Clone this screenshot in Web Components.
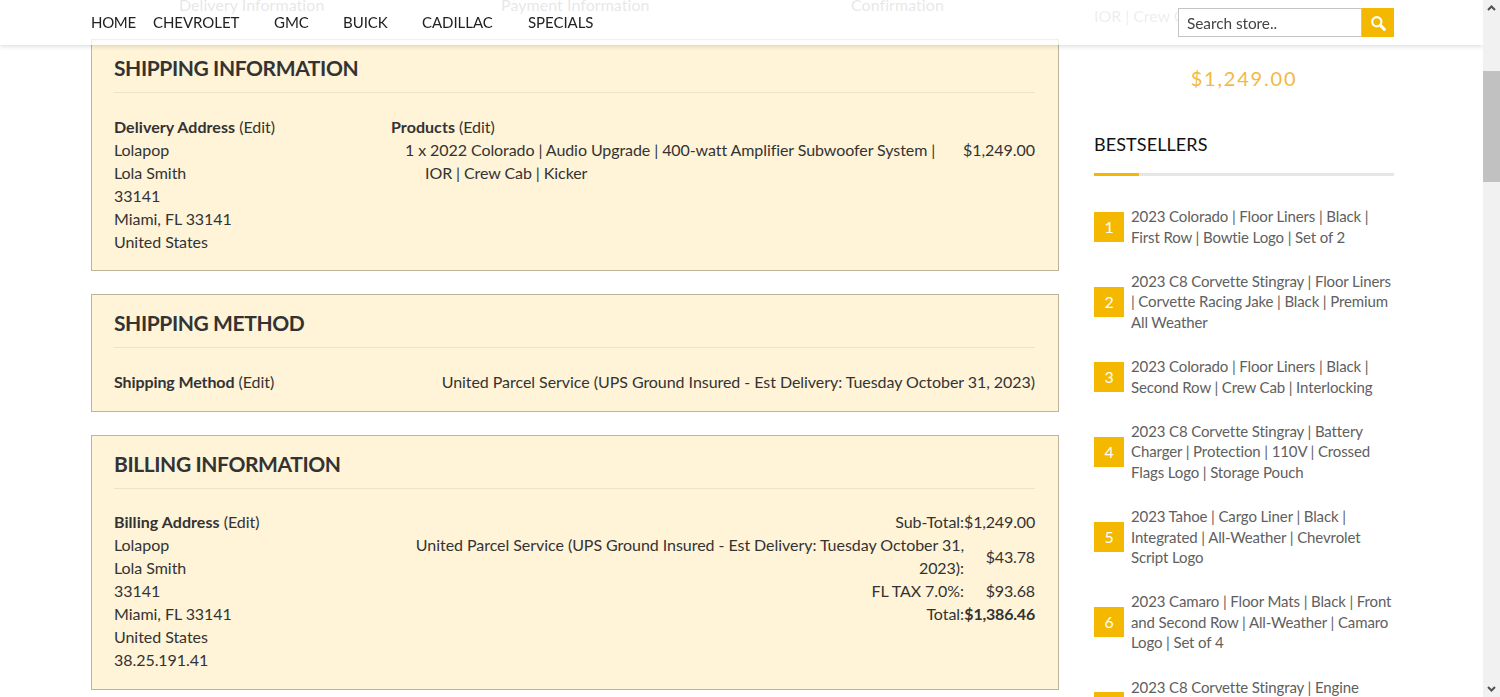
<!DOCTYPE html>
<html>
<head>
<meta charset="utf-8">
<style>
    html, body { margin: 0; height: 697px; overflow: hidden; background: #fff; }
    body { font-family: Lato, "Open Sans", sans-serif; font-size: 16px; line-height: 23px; color: #333; letter-spacing: -.05px; }
</style>
</head>
<body>
<store-header></store-header>
<fake-scrollbar></fake-scrollbar>
<checkout-page>
    <checkout-steps></checkout-steps>
    <info-card title="SHIPPING INFORMATION" style="height:232px">
        <shipping-info></shipping-info>
    </info-card>
    <info-card title="SHIPPING METHOD" style="height:118px">
        <method-row></method-row>
    </info-card>
    <info-card title="BILLING INFORMATION" style="height:255px">
        <billing-info></billing-info>
    </info-card>
    <best-sellers slot="side"></best-sellers>
</checkout-page>

<script>
function addShadow(el, html) {
    const shadow = el.attachShadow({ mode: 'open' });
    const template = document.createElement('template');
    template.innerHTML = html;
    shadow.appendChild(template.content.cloneNode(true));
}

class StoreHeader extends HTMLElement {
    connectedCallback() {
        const menu = [['HOME', 62], ['CHEVROLET', 121], ['GMC', 69], ['BUICK', 79], ['CADILLAC', 106], ['SPECIALS', 80]];
        addShadow(this, `
            <style>
                :host {
                    position: fixed; top: 0; left: 0; width: 1483px; height: 45px; z-index: 5;
                    box-sizing: border-box; padding: 8px 89px 0 91px;
                    display: flex; justify-content: space-between; align-items: flex-start;
                    background: rgba(255,255,255,.8);
                    box-shadow: 0 1px 5px rgba(0,0,0,.16);
                }
                nav { display: flex; color: #222; font-size: 15px; line-height: 28px; }
                nav span:first-child { letter-spacing: -.3px; }
                .search { display: flex; height: 29px; }
                .box {
                    width: 184px; box-sizing: border-box; border: 1px solid #c4c4c4; background: #fff;
                    padding-left: 8px; line-height: 28px; color: #444; font-size: 15.4px;
                }
                .btn { width: 32px; background: #f4b800; display: flex; align-items: center; justify-content: center; }
            </style>
            <nav>${menu.map(m => `<span style="width:${m[1]}px">${m[0]}</span>`).join('')}</nav>
            <div class="search">
                <div class="box">Search store..</div>
                <div class="btn">
                    <svg width="16" height="16" viewBox="0 0 16 16" fill="none" stroke="#fff">
                        <circle cx="6.8" cy="6.8" r="4.6" stroke-width="2.2"/>
                        <path d="M10.4 10.4 L14.4 14.4" stroke-width="3" stroke-linecap="round"/>
                    </svg>
                </div>
            </div>
        `);
    }
}

class FakeScrollbar extends HTMLElement {
    connectedCallback() {
        addShadow(this, `
            <style>
                :host {
                    position: fixed; top: 0; right: 0; width: 17px; height: 697px; z-index: 6;
                    background: #f1f1f1; display: flex; flex-direction: column; justify-content: space-between;
                }
                .thumb { position: absolute; top: 71px; left: 0; width: 17px; height: 111px; background: #c1c1c1; }
                svg { display: block; margin: 5px auto; }
            </style>
            <svg width="9" height="6" viewBox="0 0 9 6" fill="none" stroke="#505050" stroke-width="2"><path d="M1 5 L4.5 1.5 L8 5"/></svg>
            <div class="thumb"></div>
            <svg width="9" height="6" viewBox="0 0 9 6" fill="none" stroke="#505050" stroke-width="2"><path d="M1 1 L4.5 4.5 L8 1"/></svg>
        `);
    }
}

class CheckoutPage extends HTMLElement {
    connectedCallback() {
        addShadow(this, `
            <style>
                :host {
                    display: grid; grid-template-columns: 968px 300px; column-gap: 35px;
                    padding-left: 91px; margin-top: -10px;
                }
                .main { display: flex; flex-direction: column; }
            </style>
            <div class="main"><slot></slot></div>
            <div><slot name="side"></slot></div>
        `);
    }
}

class CheckoutSteps extends HTMLElement {
    connectedCallback() {
        addShadow(this, `
            <style>
                :host {
                    display: flex; box-sizing: border-box; height: 49px; color: #888; line-height: 23px;
                    padding: 3px 0 0 88px; letter-spacing: .05px;
                }
                span { display: block; }
            </style>
            <span style="width:322px">Delivery Information</span>
            <span style="width:350px">Payment Information</span>
            <span>Confirmation</span>
        `);
    }
}

class InfoCard extends HTMLElement {
    connectedCallback() {
        addShadow(this, `
            <style>
                :host {
                    display: block; box-sizing: border-box; margin-bottom: 23px;
                    background: #fff3d8; border: 1px solid #bdb49c; padding: 0 23px 0 22px;
                }
                h2 {
                    margin: 0 0 22px; height: 53px; line-height: 55px; box-sizing: border-box;
                    font-size: 21px; font-weight: 700; color: #333; letter-spacing: -.4px;
                    border-bottom: 1px solid #ece3cb;
                }
            </style>
            <h2>${this.getAttribute('title')}</h2>
            <slot></slot>
        `);
    }
}

const labelStyle = `
    b { font-weight: 700; letter-spacing: .06px; }
`;

class ShippingInfo extends HTMLElement {
    connectedCallback() {
        addShadow(this, `
            <style>
                :host { display: grid; grid-template-columns: 277px 1fr; }
                ${labelStyle}
                .line { display: flex; justify-content: space-between; margin-left: 14px; }
                .name { padding-left: 20px; text-indent: -20px; letter-spacing: -.08px; }
            </style>
            <div>
                <b>Delivery Address</b> (Edit)<br>
                Lolapop<br>Lola Smith<br>33141<br>Miami, FL 33141<br>United States
            </div>
            <div>
                <b>Products</b> (Edit)
                <div class="line">
                    <div class="name">1 x 2022 Colorado | Audio Upgrade | 400-watt Amplifier Subwoofer System |<br>IOR | Crew Cab | Kicker</div>
                    <div>$1,249.00</div>
                </div>
            </div>
        `);
    }
}

class MethodRow extends HTMLElement {
    connectedCallback() {
        addShadow(this, `
            <style>
                :host { display: flex; justify-content: space-between; }
                b { font-weight: 700; letter-spacing: -.1px; }
            </style>
            <div><b>Shipping Method</b> (Edit)</div>
            <div>United Parcel Service (UPS Ground Insured - Est Delivery: Tuesday October 31, 2023)</div>
        `);
    }
}

class BillingInfo extends HTMLElement {
    connectedCallback() {
        const rows = [
            ['Sub-Total:', '$1,249.00'],
            ['United Parcel Service (UPS Ground Insured - Est Delivery: Tuesday October 31,<br>2023):', '$43.78'],
            ['FL TAX 7.0%:', '$93.68'],
            ['Total:', '<b>$1,386.46</b>']
        ];
        addShadow(this, `
            <style>
                :host { display: grid; grid-template-columns: 301px 1fr; margin-top: -1px; }
                ${labelStyle}
                .totals { display: grid; grid-template-columns: 549px 71px; align-content: start; text-align: right; }
                .lbl { white-space: nowrap; }
                .val { align-self: center; letter-spacing: -.15px; }
                .val b { letter-spacing: -.2px; }
            </style>
            <div>
                <b>Billing Address</b> (Edit)<br>
                Lolapop<br>Lola Smith<br>33141<br>Miami, FL 33141<br>United States<br>38.25.191.41
            </div>
            <div class="totals">
                ${rows.map(r => `<div class="lbl">${r[0]}</div><div class="val">${r[1]}</div>`).join('')}
            </div>
        `);
    }
}

const bestsellers = [
    '2023 Colorado | Floor Liners | Black | First Row | Bowtie Logo | Set of 2',
    '2023 C8 Corvette Stingray | Floor Liners | Corvette Racing Jake | Black | Premium All Weather',
    '2023 Colorado | Floor Liners | Black | Second Row | Crew Cab | Interlocking',
    '2023 C8 Corvette Stingray | Battery Charger | Protection | 110V | Crossed Flags Logo | Storage Pouch',
    '2023 Tahoe | Cargo Liner | Black | Integrated | All-Weather | Chevrolet Script Logo',
    '2023 Camaro | Floor Mats | Black | Front and Second Row | All-Weather | Camaro Logo | Set of 4',
    '2023 C8 Corvette Stingray | Engine<br>&nbsp;<br>&nbsp;'
];

class RankItem extends HTMLElement {
    connectedCallback() {
        addShadow(this, `
            <style>
                :host { display: flex; align-items: center; gap: 7px; }
                .num {
                    flex: none; width: 30px; height: 30px; background: #f4b800; color: #fff;
                    text-align: center; line-height: 30px;
                }
                .txt { font-size: 15px; line-height: 20.5px; color: #606060; letter-spacing: -.12px; }
            </style>
            <div class="num">${this.getAttribute('rank')}</div>
            <div class="txt"><slot></slot></div>
        `);
    }
}

class BestSellers extends HTMLElement {
    connectedCallback() {
        addShadow(this, `
            <style>
                :host { display: block; }
                .crew { color: #aaa; height: 24px; line-height: 23px; padding-top: 14px; white-space: nowrap; }
                .price {
                    text-align: center; font-size: 20px; letter-spacing: 1.8px; color: #f4b942;
                    line-height: 30px; margin: 35px 0 38px;
                }
                h3 {
                    margin: 0; font-size: 18px; font-weight: 400; color: #111; line-height: 26px;
                    padding-bottom: 16px; border-bottom: 3px solid #e6e6e6; position: relative; letter-spacing: .1px;
                }
                h3::after {
                    content: ""; position: absolute; left: 0; bottom: -3px; width: 45px; height: 3px; background: #f4b800;
                }
                .list { display: flex; flex-direction: column; gap: 23.75px; margin-top: 30px; }
            </style>
            <div class="crew">IOR | Crew Cab | Kicker</div>
            <div class="price">$1,249.00</div>
            <h3>BESTSELLERS</h3>
            <div class="list">
                ${bestsellers.map((t, i) => `<rank-item rank="${i + 1}">${t}</rank-item>`).join('')}
            </div>
        `);
    }
}

customElements.define('store-header', StoreHeader);
customElements.define('fake-scrollbar', FakeScrollbar);
customElements.define('checkout-page', CheckoutPage);
customElements.define('checkout-steps', CheckoutSteps);
customElements.define('info-card', InfoCard);
customElements.define('shipping-info', ShippingInfo);
customElements.define('method-row', MethodRow);
customElements.define('billing-info', BillingInfo);
customElements.define('rank-item', RankItem);
customElements.define('best-sellers', BestSellers);
</script>
</body>
</html>
